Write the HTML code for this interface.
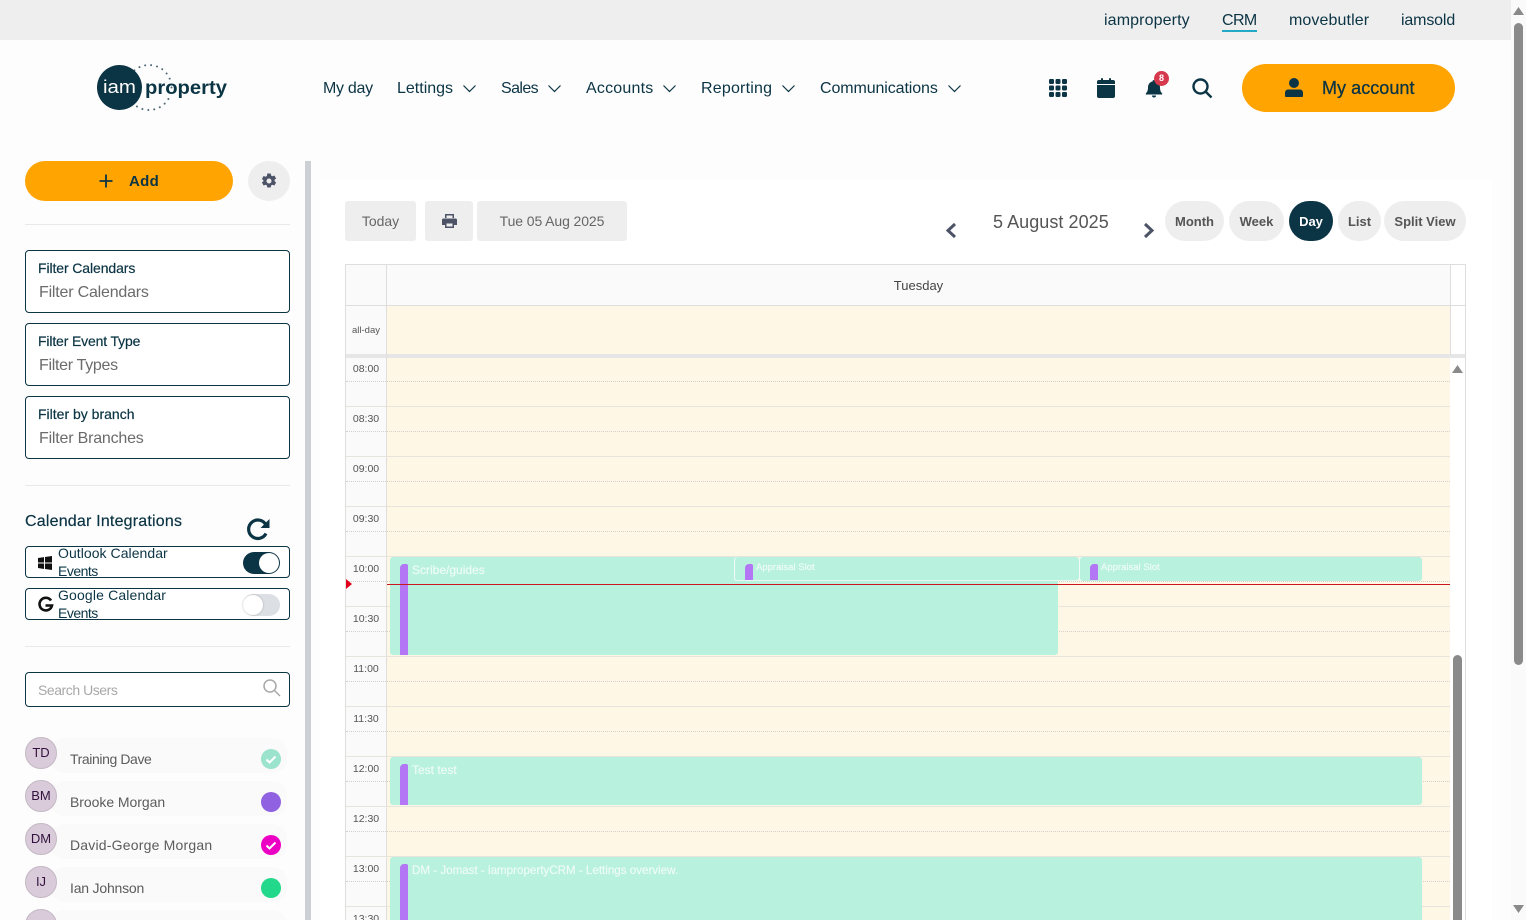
<!DOCTYPE html>
<html lang="en"><head><meta charset="utf-8"><title>Calendar</title>
<style>
html,body{margin:0;padding:0;width:1526px;height:920px;overflow:hidden;background:#fdfdfd;font-family:"Liberation Sans",sans-serif;color:#0b3444}
#w{position:relative;width:1526px;height:920px;overflow:hidden;background:#fdfdfd}
.a{position:absolute}
.t{position:absolute;white-space:nowrap;line-height:20px;height:20px}
.c{text-align:center}
.hr{position:absolute;left:25px;width:265px;height:1px;background:#e9e9e9}
.box{position:absolute;left:25px;width:263px;border:1px solid #0b3444;border-radius:4px;background:#fff}
.btn{position:absolute;top:201px;height:40px;background:#eee;border-radius:3px;color:#666;font-size:14px;line-height:40px;text-align:center}
.pill{position:absolute;top:201px;height:40px;background:#eee;border-radius:20px;color:#555;font-size:13px;font-weight:bold;line-height:41px;text-align:center}
.time{position:absolute;left:346px;width:40px;text-align:center;font-size:10.5px;color:#555;line-height:14px}
.sl{position:absolute;left:346px;width:1104px;height:1px;background:#e6e4dd}
.dl{position:absolute;left:346px;width:1104px;height:0;border-top:1px dotted #d3d1ca}
.ev{position:absolute;background:#b8f1de;border-radius:3px}
.bar{position:absolute;width:8px;background:#b377f5;border-radius:4px 2px 0 0}
.et{position:absolute;white-space:nowrap;color:rgba(255,255,255,.72);-webkit-text-stroke:.2px rgba(255,255,255,.7)}
.row{position:absolute;left:50px;width:237px;height:35px;background:#fafafa;border-radius:14px}
.av{position:absolute;left:25px;width:30px;height:30px;border:1px solid #c4b8c4;border-radius:50%;background:#d9cbd9;color:#33123f;font-size:13px;line-height:29px;text-align:center}
.nm{position:absolute;left:70px;font-size:14px;color:#5c5c5c;white-space:nowrap;line-height:20px}
.dot{position:absolute;left:261px;width:20px;height:20px;border-radius:50%}
svg{position:absolute;overflow:visible}
</style></head><body><div id="w">

<div class="a" style="left:0;top:0;width:1511px;height:40px;background:#eee"></div>
<div class="t" style="left:1104px;top:10px;font-size:16px;letter-spacing:.12px;margin-top:1px">iamproperty</div>
<div class="t" style="left:1222px;top:10px;font-size:16px;letter-spacing:-.6px;margin-top:1px">CRM</div>
<div class="a" style="left:1222px;top:30px;width:35px;height:2px;background:#22a9c6"></div>
<div class="t" style="left:1289px;top:10px;font-size:16px;letter-spacing:.1px;margin-top:1px">movebutler</div>
<div class="t" style="left:1401px;top:10px;font-size:16px;letter-spacing:-.15px;margin-top:1px">iamsold</div>

<!-- logo -->
<svg style="left:90px;top:60px" width="145" height="56" viewBox="0 0 145 56">
<circle cx="59" cy="27.500" r="22.500" fill="none" stroke="#4a6672" stroke-width="2" stroke-linecap="round" stroke-dasharray="0 6"/>
<circle cx="29.500" cy="27.500" r="22.500" fill="#0b3444"/>
<text x="13" y="33" font-family="Liberation Sans" font-size="18" fill="#fff" textLength="33" lengthAdjust="spacingAndGlyphs">iam</text>
<text x="55" y="34" font-family="Liberation Sans" font-weight="bold" font-size="19" fill="#0b3444" stroke="#fdfdfd" stroke-width="2" paint-order="stroke" textLength="82" lengthAdjust="spacingAndGlyphs">property</text>
</svg>

<!-- main nav -->
<div class="t" style="left:323px;top:79px;font-size:16px;letter-spacing:-.3px">My day</div>
<div class="t" style="left:397px;top:79px;font-size:16px">Lettings</div>
<div class="t" style="left:501px;top:79px;font-size:16px;letter-spacing:-.6px">Sales</div>
<div class="t" style="left:586px;top:79px;font-size:16px;letter-spacing:.2px">Accounts</div>
<div class="t" style="left:701px;top:79px;font-size:16px;letter-spacing:.2px">Reporting</div>
<div class="t" style="left:820px;top:79px;font-size:16px;letter-spacing:-.1px">Communications</div>
<svg style="left:0;top:0" width="1000" height="120" fill="none" stroke="#0b3444" stroke-width="1.2">
<path d="M463.500 85.500l6 6 6-6M548.500 85.500l6 6 6-6M663.500 85.500l6 6 6-6M782.500 85.500l6 6 6-6M948.500 85.500l6 6 6-6"/>
</svg>

<!-- top icons -->
<svg style="left:1049px;top:79px" width="18" height="18" fill="#0b3444">
<rect x="0" y="0" width="5" height="5" rx="1.200"/><rect x="6.500" y="0" width="5" height="5" rx="1.200"/><rect x="13" y="0" width="5" height="5" rx="1.200"/>
<rect x="0" y="6.500" width="5" height="5" rx="1.200"/><rect x="6.500" y="6.500" width="5" height="5" rx="1.200"/><rect x="13" y="6.500" width="5" height="5" rx="1.200"/>
<rect x="0" y="13" width="5" height="5" rx="1.200"/><rect x="6.500" y="13" width="5" height="5" rx="1.200"/><rect x="13" y="13" width="5" height="5" rx="1.200"/>
</svg>
<svg style="left:1097px;top:78px" width="18" height="20" fill="#0b3444">
<rect x="4" y="0" width="2" height="4" rx="1"/><rect x="12" y="0" width="2" height="4" rx="1"/>
<path d="M2 2h14a2 2 0 0 1 2 2v2H0V4a2 2 0 0 1 2-2zM0 7h18v11a2 2 0 0 1-2 2H2a2 2 0 0 1-2-2z"/>
</svg>
<svg style="left:1145px;top:78px" width="28" height="20">
<path fill="#0b3444" d="M9 2a1.500 1.500 0 0 1 1.500 1.500c3 .6 4.500 3 4.500 6 0 3 .8 4.500 2.200 6V16.500H.8V15.500C2.200 14 3 12.500 3 9.500c0-3 1.500-5.400 4.500-6A1.500 1.500 0 0 1 9 2z"/>
<path fill="#0b3444" d="M7 17.500h4a2 2 0 0 1-4 0z"/>
</svg>
<div class="a" style="left:1154px;top:71px;width:15px;height:15px;border-radius:50%;background:#d7394c;color:#fff;font-size:9px;font-weight:bold;line-height:15px;text-align:center">8</div>
<svg style="left:1191px;top:78px" width="22" height="20" fill="none" stroke="#0b3444" stroke-width="2.400">
<circle cx="9.500" cy="8.500" r="7"/><path d="M14.500 13.500l6 6"/>
</svg>

<div class="a" style="left:1242px;top:64px;width:213px;height:48px;border-radius:24px;background:#ffa400"></div>
<svg style="left:1285px;top:78px" width="18" height="20" fill="#0b3444">
<circle cx="9" cy="5" r="5"/><path d="M3 11.500h12a3 3 0 0 1 3 3V18a1 1 0 0 1-1 1H1a1 1 0 0 1-1-1v-3.500a3 3 0 0 1 3-3z"/>
</svg>
<div class="t" style="left:1322px;top:78px;font-size:18px;letter-spacing:.05px;-webkit-text-stroke:.3px #0b3444">My account</div>

<!-- sidebar -->
<div class="a" style="left:305px;top:161px;width:6px;height:759px;background:#ccd0d5"></div>
<div class="a" style="left:25px;top:161px;width:208px;height:40px;border-radius:20px;background:#ffa400"></div>
<svg style="left:99px;top:174px" width="14" height="14" stroke="#0b3444" stroke-width="1.800"><path d="M7 .5v13M.5 7h13"/></svg>
<div class="t" style="left:129px;top:172px;font-size:15px;font-weight:bold;letter-spacing:.3px">Add</div>
<div class="a" style="left:248px;top:161px;width:42px;height:40px;border-radius:50%;background:#eee"></div>
<svg style="left:261px;top:173px" width="16" height="16" viewBox="0 0 16 16">
<path fill="#4d5366" fill-rule="evenodd" d="M6.300.5h3.400l.4 2 1.300.7 2-.7 1.700 3-1.500 1.300v1.400l1.500 1.300-1.700 3-2-.7-1.300.7-.4 2H6.300l-.4-2-1.300-.7-2 .7-1.700-3 1.500-1.300V7.300L.9 6l1.700-3 2 .7 1.300-.7zM8 5.500a2.500 2.500 0 1 0 0 5 2.500 2.500 0 0 0 0-5z"/>
</svg>
<div class="hr" style="top:224px"></div>

<div class="box" style="top:250px;height:61px"></div>
<div class="t" style="left:38px;top:258px;font-size:14px;letter-spacing:-.1px;-webkit-text-stroke:.2px #0b3444">Filter Calendars</div>
<div class="t" style="left:39px;top:283px;font-size:16px;color:#6b6b6b;letter-spacing:-.2px">Filter Calendars</div>
<div class="box" style="top:323px;height:61px"></div>
<div class="t" style="left:38px;top:331px;font-size:14px;-webkit-text-stroke:.2px #0b3444;letter-spacing:-.15px">Filter Event Type</div>
<div class="t" style="left:39px;top:356px;font-size:16px;color:#6b6b6b;letter-spacing:-.3px">Filter Types</div>
<div class="box" style="top:396px;height:61px"></div>
<div class="t" style="left:38px;top:404px;font-size:14px;-webkit-text-stroke:.2px #0b3444">Filter by branch</div>
<div class="t" style="left:39px;top:429px;font-size:16px;color:#6b6b6b;letter-spacing:-.2px">Filter Branches</div>
<div class="hr" style="top:485px"></div>

<div class="t" style="left:25px;top:512px;font-size:16px;letter-spacing:.2px;-webkit-text-stroke:.2px #0b3444">Calendar Integrations</div>
<svg style="left:246px;top:516px" width="24" height="24" fill="none">
<path d="M20 9A9.200 9.200 0 1 0 20 17.500" stroke="#0b3444" stroke-width="3.200"/>
<path d="M23.500 3v9h-9z" fill="#0b3444"/>
</svg>

<div class="box" style="top:546px;height:30px"></div>
<div class="t" style="left:58px;top:543px;font-size:14px;letter-spacing:.05px">Outlook Calendar</div>
<div class="t" style="left:58px;top:561px;font-size:14px;letter-spacing:-.5px">Events</div>
<svg style="left:38px;top:556px" width="14" height="14" fill="#111"><path d="M0 2l6-.9V6.500H0zM7 1l7-1v6.500H7zM0 7.500h6v5.500L0 12zM7 7.500h7V14l-7-1z"/></svg>
<div class="a" style="left:243px;top:552px;width:37px;height:22px;border-radius:11px;background:#0b3444"></div>
<div class="a" style="left:259px;top:553px;width:20px;height:20px;border-radius:50%;background:#fff"></div>

<div class="box" style="top:588px;height:30px"></div>
<div class="t" style="left:58px;top:585px;font-size:14px;letter-spacing:.15px">Google Calendar</div>
<div class="t" style="left:58px;top:603px;font-size:14px;letter-spacing:-.5px">Events</div>
<svg style="left:38px;top:597px" width="15" height="15" fill="none"><path d="M13 3.500A6.300 6.300 0 1 0 14 8.500H7.500" stroke="#111" stroke-width="2.600"/></svg>
<div class="a" style="left:243px;top:594px;width:37px;height:22px;border-radius:11px;background:#dcdfe3"></div>
<div class="a" style="left:243px;top:595px;width:20px;height:20px;border-radius:50%;background:#fff;box-shadow:0 0 2px rgba(0,0,0,.25)"></div>
<div class="hr" style="top:646px"></div>

<div class="box" style="top:672px;height:33px"></div>
<div class="t" style="left:38px;top:680px;font-size:14px;color:#a8a8a8;letter-spacing:-.45px">Search Users</div>
<svg style="left:263px;top:679px" width="18" height="18" fill="none" stroke="#a8a8a8" stroke-width="1.500"><circle cx="7" cy="7" r="6"/><path d="M11.500 11.500l5.500 5.500"/></svg>

<div class="row" style="top:738px"></div>
<div class="row" style="top:781px"></div>
<div class="row" style="top:824px"></div>
<div class="row" style="top:867px"></div>
<div class="row" style="top:910px"></div>
<div class="av" style="top:737px">TD</div>
<div class="av" style="top:780px">BM</div>
<div class="av" style="top:823px">DM</div>
<div class="av" style="top:866px">IJ</div>
<div class="av" style="top:909px"></div>
<div class="nm" style="top:749px;letter-spacing:-.4px">Training Dave</div>
<div class="nm" style="top:792px;letter-spacing:-.05px">Brooke Morgan</div>
<div class="nm" style="top:835px;letter-spacing:.2px">David-George Morgan</div>
<div class="nm" style="top:878px;letter-spacing:-.2px">Ian Johnson</div>
<div class="dot" style="top:749px;background:#9be3cd"></div>
<div class="dot" style="top:792px;background:#9061e0"></div>
<div class="dot" style="top:835px;background:#ec00c4"></div>
<div class="dot" style="top:878px;background:#22d88a"></div>
<svg style="left:261px;top:749px" width="20" height="20" fill="none" stroke="#fff" stroke-width="2"><path d="M5.500 10.500l3 3 6-6"/></svg>
<svg style="left:261px;top:835px" width="20" height="20" fill="none" stroke="#fff" stroke-width="2"><path d="M5.500 10.500l3 3 6-6"/></svg>

<!-- calendar panel -->
<div class="a" style="left:320px;top:180px;width:1172px;height:740px;background:#fff"></div>
<div class="btn" style="left:345px;width:71px">Today</div>
<div class="btn" style="left:425px;width:48px"></div>
<svg style="left:442px;top:214px" width="15" height="14" fill="#4d5366"><path fill-rule="evenodd" d="M3 0h9v4H3zM1.500 4.500h12A1.500 1.500 0 0 1 15 6v5h-3v3H3v-3H0V6a1.500 1.500 0 0 1 1.500-1.500zM4.500 9.500v3h6v-3z"/><rect x="4.500" y="1.500" width="6" height="2.500" fill="#eee"/></svg>
<div class="btn" style="left:477px;width:150px;letter-spacing:-.1px">Tue 05 Aug 2025</div>
<div class="t" style="left:993px;top:212px;font-size:18px;color:#555;letter-spacing:.05px">5 August 2025</div>
<svg style="left:945px;top:222px" width="12" height="17" fill="none" stroke="#4d5366" stroke-width="3"><path d="M10 2L3 8.500l7 6.500"/></svg>
<svg style="left:1143px;top:222px" width="12" height="17" fill="none" stroke="#4d5366" stroke-width="3"><path d="M2 2l7 6.500L2 15"/></svg>
<div class="pill" style="left:1165px;width:59px">Month</div>
<div class="pill" style="left:1229px;width:55px">Week</div>
<div class="pill" style="left:1289px;width:44px;background:#0b3444;color:#fff">Day</div>
<div class="pill" style="left:1338px;width:43px">List</div>
<div class="pill" style="left:1384px;width:82px">Split View</div>

<!-- grid -->
<div class="a" style="left:345px;top:264px;width:1119px;height:656px;border:1px solid #dedede;border-bottom:0"></div>
<div class="a" style="left:346px;top:265px;width:1104px;height:40px;background:#fafafa"></div>
<div class="a" style="left:346px;top:305px;width:1119px;height:1px;background:#dedede"></div>
<div class="a" style="left:387px;top:306px;width:1063px;height:48px;background:#fef7e5"></div>
<div class="a" style="left:346px;top:306px;width:40px;height:48px;background:#fafafa"></div>
<div class="a" style="left:346px;top:354px;width:1119px;height:4px;background:#e6e6e6"></div>
<div class="a" style="left:387px;top:358px;width:1063px;height:562px;background:#fef7e5"></div>
<div class="a" style="left:346px;top:358px;width:40px;height:562px;background:#fafafa"></div>
<div class="a" style="left:386px;top:265px;width:1px;height:655px;background:#dedede"></div>
<div class="a" style="left:1450px;top:265px;width:1px;height:90px;background:#dedede"></div>
<div class="t c" style="left:387px;top:276px;width:1063px;font-size:13px;color:#444">Tuesday</div>
<div class="time" style="top:324px;font-size:9.500px">all-day</div>

<div class="dl" style="top:381px"></div><div class="sl" style="top:406px"></div>
<div class="dl" style="top:431px"></div><div class="sl" style="top:456px"></div>
<div class="dl" style="top:481px"></div><div class="sl" style="top:506px"></div>
<div class="dl" style="top:531px"></div><div class="sl" style="top:556px"></div>
<div class="dl" style="top:581px"></div><div class="sl" style="top:606px"></div>
<div class="dl" style="top:631px"></div><div class="sl" style="top:656px"></div>
<div class="dl" style="top:681px"></div><div class="sl" style="top:706px"></div>
<div class="dl" style="top:731px"></div><div class="sl" style="top:756px"></div>
<div class="dl" style="top:781px"></div><div class="sl" style="top:806px"></div>
<div class="dl" style="top:831px"></div><div class="sl" style="top:856px"></div>
<div class="dl" style="top:881px"></div><div class="sl" style="top:906px"></div>

<div class="time" style="top:362px">08:00</div>
<div class="time" style="top:412px">08:30</div>
<div class="time" style="top:462px">09:00</div>
<div class="time" style="top:512px">09:30</div>
<div class="time" style="top:562px">10:00</div>
<div class="time" style="top:612px">10:30</div>
<div class="time" style="top:662px">11:00</div>
<div class="time" style="top:712px">11:30</div>
<div class="time" style="top:762px">12:00</div>
<div class="time" style="top:812px">12:30</div>
<div class="time" style="top:862px">13:00</div>
<div class="time" style="top:912px">13:30</div>

<!-- events -->
<div class="ev" style="left:390px;top:557px;width:668px;height:98px"></div>
<div class="ev" style="left:734px;top:557px;width:345px;height:24px;box-shadow:inset 1px 0 0 rgba(255,255,255,.8),inset 0 -1px 0 rgba(255,255,255,.6)"></div>
<div class="ev" style="left:1079px;top:557px;width:343px;height:24px;box-shadow:inset 1px 0 0 rgba(255,255,255,.8)"></div>
<div class="bar" style="left:400px;top:564px;height:91px"></div>
<div class="bar" style="left:745px;top:564px;height:16px"></div>
<div class="bar" style="left:1090px;top:564px;height:16px"></div>
<div class="et" style="left:412px;top:563px;font-size:12px">Scribe/guides</div>
<div class="et" style="left:756px;top:562px;font-size:9.500px">Appraisal Slot</div>
<div class="et" style="left:1101px;top:562px;font-size:9.500px">Appraisal Slot</div>
<div class="a" style="left:387px;top:584px;width:1063px;height:1px;background:#c8171d"></div>
<svg style="left:346px;top:579px" width="6" height="10"><path d="M0 0l6 5-6 5z" fill="#e3001b"/></svg>

<div class="ev" style="left:390px;top:757px;width:1032px;height:48px"></div>
<div class="bar" style="left:400px;top:764px;height:41px"></div>
<div class="et" style="left:412px;top:763px;font-size:12px">Test test</div>
<div class="ev" style="left:390px;top:857px;width:1032px;height:63px;border-radius:3px 3px 0 0"></div>
<div class="bar" style="left:400px;top:864px;height:56px"></div>
<div class="et" style="left:412px;top:864px;font-size:11.600px">DM - Jomast - iampropertyCRM - Lettings overview.</div>

<!-- inner scrollbar -->
<svg style="left:1452px;top:365px" width="11" height="8"><path d="M5.500 0l5.500 8H0z" fill="#8a8a8a"/></svg>
<div class="a" style="left:1453px;top:655px;width:9px;height:265px;border-radius:4.500px 4.500px 0 0;background:#8a8a8a"></div>

<!-- page scrollbar -->
<div class="a" style="left:1511px;top:0;width:15px;height:920px;background:#fafafa"></div>
<svg style="left:1513px;top:7px" width="11" height="8"><path d="M5.500 0l5.500 8H0z" fill="#8a8a8a"/></svg>
<div class="a" style="left:1514px;top:23px;width:9px;height:642px;border-radius:4.500px;background:#8a8a8a"></div>
<svg style="left:1513px;top:905px" width="11" height="8"><path d="M0 0h11L5.500 8z" fill="#8a8a8a"/></svg>

</div></body></html>
